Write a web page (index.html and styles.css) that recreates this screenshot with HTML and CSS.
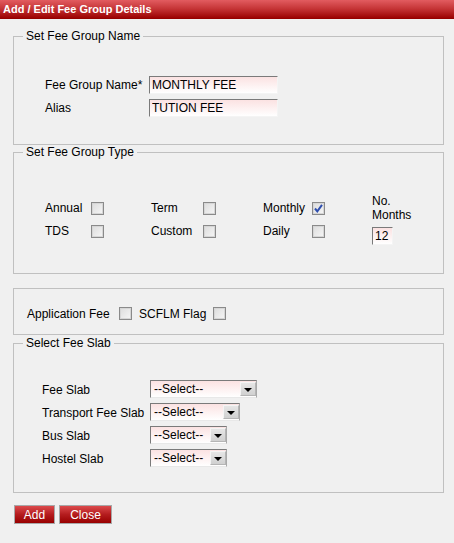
FILE: index.html
```html
<!DOCTYPE html>
<html>
<head>
<meta charset="utf-8">
<title>Add / Edit Fee Group Details</title>
<link rel="stylesheet" href="styles.css">
</head>
<body>
<div class="titlebar">Add / Edit Fee Group Details</div>
<form class="form">
  <fieldset class="fs fs-name">
    <legend>Set Fee Group Name</legend>
    <div class="name-grid">
      <label class="lbl">Fee Group Name*</label>
      <input class="txt txt-name" type="text" value="MONTHLY FEE">
      <label class="lbl">Alias</label>
      <input class="txt txt-name" type="text" value="TUTION FEE">
    </div>
  </fieldset>

  <fieldset class="fs fs-type">
    <legend>Set Fee Group Type</legend>
    <div class="type-grid">
      <span class="lbl r1">Annual</span><span class="cb r1"></span>
      <span class="lbl r1">Term</span><span class="cb r1"></span>
      <span class="lbl r1">Monthly</span><span class="cb r1 checked"><svg width="11" height="11" viewBox="0 0 11 11"><path d="M2 5.5 L4.3 8.3 L9 1.8" fill="none" stroke="#2f4fae" stroke-width="2"/></svg></span>
      <span class="months-lbl r1">No.<br>Months</span>
      <span class="lbl r2">TDS</span><span class="cb r2"></span>
      <span class="lbl r2">Custom</span><span class="cb r2"></span>
      <span class="lbl r2">Daily</span><span class="cb r2"></span>
      <input class="txt txt-months r2" type="text" value="12">
    </div>
  </fieldset>

  <fieldset class="fs fs-flags">
    <div class="flag-row">
      <span class="lbl lbl-app">Application Fee</span><span class="cb cb-app"></span>
      <span class="lbl lbl-scflm">SCFLM Flag</span><span class="cb"></span>
    </div>
  </fieldset>

  <fieldset class="fs fs-slab">
    <legend>Select Fee Slab</legend>
    <div class="slab-grid">
      <span class="lbl">Fee Slab</span>
      <div class="sel sel-w1"><span class="sel-text">--Select--</span><span class="sel-btn"><span class="tri"></span></span></div>
      <span class="lbl">Transport Fee Slab</span>
      <div class="sel sel-w2"><span class="sel-text">--Select--</span><span class="sel-btn"><span class="tri"></span></span></div>
      <span class="lbl">Bus Slab</span>
      <div class="sel sel-w3"><span class="sel-text">--Select--</span><span class="sel-btn"><span class="tri"></span></span></div>
      <span class="lbl">Hostel Slab</span>
      <div class="sel sel-w3"><span class="sel-text">--Select--</span><span class="sel-btn"><span class="tri"></span></span></div>
    </div>
  </fieldset>

  <div class="actions">
    <button type="button" class="btn btn-add">Add</button>
    <button type="button" class="btn btn-close">Close</button>
  </div>
</form>
</body>
</html>
```
FILE: styles.css
```css
* { box-sizing: border-box; }
html, body {
  margin: 0;
  padding: 0;
  background: #f0f0f0;
  font-family: "Liberation Sans", Arial, sans-serif;
  font-size: 12px;
  color: #000;
}
.titlebar {
  height: 19px;
  line-height: 18px;
  padding-left: 3px;
  color: #fff;
  font-weight: bold;
  font-size: 11px;
  background: linear-gradient(to bottom, #e25c60 0%, #c43335 50%, #9c0202 100%);
  border-bottom: 1px solid #950000;
}
.form {
  padding-top: 10px;
}
.fs {
  margin: 0 10px 0 13px;
  border: 1px solid #c0c0c0;
  padding: 0;
  min-width: 0;
}
.fs legend {
  margin-left: 9px;
  padding: 0 3px;
  line-height: 14px;
  font-size: 12px;
  color: #000;
}
.lbl {
  white-space: nowrap;
  line-height: 14px;
}
.txt {
  font-family: "Liberation Sans", Arial, sans-serif;
  font-size: 12px;
  color: #000;
  height: 18px;
  margin: 0;
  padding: 0 0 0 2px;
  border: 0;
  border-top: 1px solid #7a7a7a;
  border-left: 1px solid #7a7a7a;
  border-right: 1px solid #f4f4f4;
  border-bottom: 1px solid #f4f4f4;
  background: linear-gradient(to bottom, #fbe2e2 0%, #ffffff 100%);
  outline: none;
}
/* fieldset 1 */
.fs-name { padding: 33px 0 27px 0; }
.name-grid {
  display: grid;
  grid-template-columns: 104px 129px;
  row-gap: 5px;
  align-items: center;
  padding-left: 31px;
}
.txt-name { width: 129px; }

/* fieldset 2 */
.fs-type { padding: 35px 0 28px 0; }
.type-grid {
  display: grid;
  grid-template-columns: 46px 60px 52px 60px 49px 60px auto;
  grid-template-rows: 28px 23px;
  align-items: center;
  padding-left: 31px;
}
.type-grid .r2 { align-self: start; margin-top: 3px; }
.type-grid .lbl.r2 { margin-top: 2px; }
.months-lbl { line-height: 14px; }
.txt-months {
  width: 21px;
  margin-top: 5px !important;
}
.cb {
  display: inline-flex;
  align-items: center;
  justify-content: center;
  flex: none;
  width: 13px;
  height: 13px;
  border: 1px solid #8a8a8a;
  box-shadow: inset 0 0 0 1px #d6d6d6;
  background: linear-gradient(135deg, #dcdcdc 0%, #f6f6f6 100%);
}
.cb svg { display: block; }

/* fieldset 3 */
.fs-flags {
  margin-top: 14px;
  padding: 18px 0 14px 0;
}
.flag-row {
  display: flex;
  align-items: center;
  height: 13px;
  padding-left: 13px;
}
.lbl-app { width: 92px; }
.cb-app { margin-right: 7px; }
.lbl-scflm { width: 74px; }

/* fieldset 4 */
.fs-slab {
  margin-top: 1px;
  padding: 30px 0 25px 0;
}
.slab-grid {
  display: grid;
  grid-template-columns: 108px auto;
  row-gap: 5px;
  align-items: center;
  justify-items: start;
  padding-left: 28px;
}
.slab-grid .lbl { margin-top: 2px; }
.sel {
  display: flex;
  height: 18px;
  border-top: 1px solid #7a7a7a;
  border-left: 1px solid #7a7a7a;
  border-right: 1px solid #a9a9a9;
  border-bottom: 1px solid #e8e8e8;
  background: linear-gradient(to bottom, #fbe2e2 0%, #ffffff 100%);
}
.sel-w1 { width: 107px; }
.sel-w2 { width: 90px; }
.sel-w3 { width: 77px; }
.sel-text {
  flex: 1;
  padding-left: 3px;
  line-height: 16px;
  white-space: nowrap;
  overflow: hidden;
}
.sel-btn {
  width: 16px;
  margin: 1px 0 1px 0;
  display: flex;
  align-items: center;
  justify-content: center;
  background: linear-gradient(to bottom, #e6e6e6, #d0d0d0);
  border: 1px solid #b5b5b5;
  border-top-color: #f4f4f4;
  border-left-color: #f4f4f4;
}
.tri {
  width: 0;
  height: 0;
  border-left: 4px solid transparent;
  border-right: 4px solid transparent;
  border-top: 4px solid #000;
  margin-top: 2px;
}

/* buttons */
.actions {
  display: flex;
  gap: 4px;
  margin: 12px 0 0 14px;
}
.btn {
  height: 19px;
  margin: 0;
  padding: 0;
  font-family: "Liberation Sans", Arial, sans-serif;
  font-size: 12px;
  color: #fff;
  line-height: 16px;
  border: 1px solid #a8a8a8;
  background: linear-gradient(to bottom, #dc4a4c 0%, #b41c1e 50%, #980000 100%);
  cursor: pointer;
}
.btn-add { width: 41px; }
.btn-close { width: 53px; }
```
